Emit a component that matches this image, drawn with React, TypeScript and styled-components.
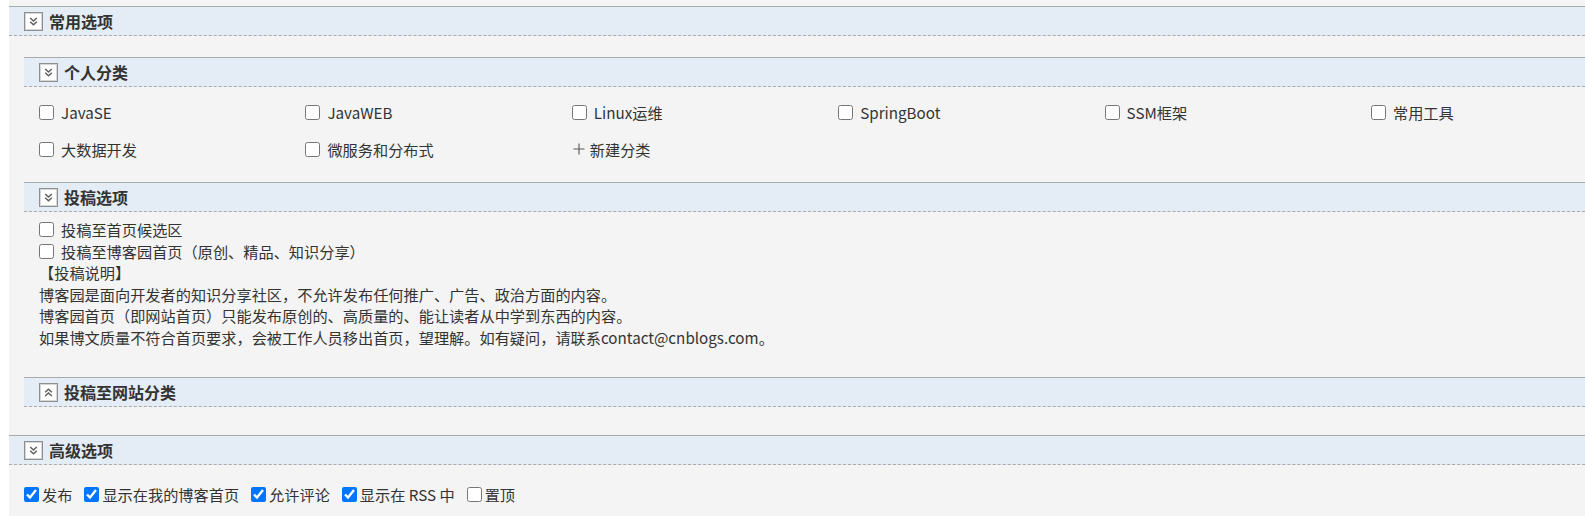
import React from "react";
import styled, { createGlobalStyle } from "styled-components";

const GlobalStyle = createGlobalStyle`
  html, body {
    margin: 0;
    padding: 0;
    background: #ffffff;
  }
  body {
    font-family: "Noto Sans CJK SC", "Noto Sans", sans-serif;
    color: #333;
  }
`;

const Page = styled.div`
  margin-left: 9px;
  padding-top: 6px;
  height: 510px;
  overflow: hidden;
  background: #f4f4f4;
`;

const Section = styled.section<{ $gap?: number }>`
  margin-top: ${(p) => p.$gap ?? 0}px;
`;

const Header = styled.div`
  display: flex;
  align-items: center;
  gap: 6px;
  height: 28px;
  padding-left: 15px;
  background: #e4ecf6;
  border-top: 1px solid #aaaaaa;
  border-bottom: 1px dashed #aaaaaa;
  font-size: 16px;
  font-weight: bold;
  color: #333;
`;

const OuterBody = styled.div`
  padding: 21px 0 0 15px;
`;

const CategoryGrid = styled.div`
  display: grid;
  grid-template-columns: repeat(5, 266.4px) auto;
  row-gap: 15px;
  padding: 14px 0 0 15px;
`;

const Item = styled.label<{ $gap?: number }>`
  display: flex;
  align-items: center;
  gap: ${(p) => p.$gap ?? 7}px;
  height: 22px;
  font-size: 15.2px;
  color: #333;
  white-space: nowrap;
`;

const Check = styled.input.attrs({ type: "checkbox" })`
  width: 15px;
  height: 15px;
  margin: 0;
  flex: none;
`;

const PlusMark = styled.span`
  display: flex;
  align-items: center;
  justify-content: center;
  width: 14px;
  height: 14px;
  color: #555;
`;

const Contribute = styled.div`
  padding: 7px 0 0 15px;
  font-size: 15.2px;
  line-height: 21.5px;
  color: #333;
`;

const ContribLine = styled.label`
  display: flex;
  align-items: center;
  gap: 7px;
  height: 21.5px;
`;

const TextLine = styled.div`
  white-space: nowrap;
`;

const OptionsRow = styled.div`
  display: flex;
  align-items: center;
  padding: 18px 0 0 15px;
  font-size: 15.2px;
  color: #333;
`;

const Option = styled.label`
  display: inline-flex;
  align-items: center;
  gap: 3px;
  height: 22px;
  margin-right: 12px;
  white-space: nowrap;
`;

const ToggleIcon: React.FC<{ up?: boolean }> = ({ up }) => (
  <svg width="19" height="19" viewBox="0 0 19 19" style={{ flex: "none" }}>
    <rect x="0.5" y="0.5" width="18" height="18" fill="#ffffff" stroke="#8f8f8f" />
    <rect x="1.5" y="1.5" width="16" height="16" fill="none" stroke="#d6d6d6" />
    {up ? (
      <g fill="none" stroke="#5f5f5f" strokeWidth="1.5">
        <path d="M6.2 9.2 L9.5 6.2 L12.8 9.2" />
        <path d="M6.2 13 L9.5 10 L12.8 13" />
      </g>
    ) : (
      <g fill="none" stroke="#5f5f5f" strokeWidth="1.5">
        <path d="M6.2 6 L9.5 9 L12.8 6" />
        <path d="M6.2 9.8 L9.5 12.8 L12.8 9.8" />
      </g>
    )}
  </svg>
);

const categories = [
  "JavaSE",
  "JavaWEB",
  "Linux运维",
  "SpringBoot",
  "SSM框架",
  "常用工具",
  "大数据开发",
  "微服务和分布式",
];

const options: { label: string; checked: boolean }[] = [
  { label: "发布", checked: true },
  { label: "显示在我的博客首页", checked: true },
  { label: "允许评论", checked: true },
  { label: "显示在 RSS 中", checked: true },
  { label: "置顶", checked: false },
];

export default function App() {
  return (
    <>
      <GlobalStyle />
      <Page>
        <Section>
          <Header>
            <ToggleIcon />
            常用选项
          </Header>
          <OuterBody>
            <Section>
              <Header>
                <ToggleIcon />
                个人分类
              </Header>
              <CategoryGrid>
                {categories.map((c) => (
                  <Item key={c}>
                    <Check />
                    {c}
                  </Item>
                ))}
                <Item as="div" $gap={4}>
                  <PlusMark>
                    <svg width="12" height="12" viewBox="0 0 12 12">
                      <path d="M6 0.5 V11.5 M0.5 6 H11.5" stroke="#555" strokeWidth="1.1" fill="none" />
                    </svg>
                  </PlusMark>
                  新建分类
                </Item>
              </CategoryGrid>
            </Section>

            <Section $gap={22}>
              <Header>
                <ToggleIcon />
                投稿选项
              </Header>
              <Contribute>
                <ContribLine>
                  <Check />
                  投稿至首页候选区
                </ContribLine>
                <ContribLine>
                  <Check />
                  投稿至博客园首页（原创、精品、知识分享）
                </ContribLine>
                <TextLine>【投稿说明】</TextLine>
                <TextLine>博客园是面向开发者的知识分享社区，不允许发布任何推广、广告、政治方面的内容。</TextLine>
                <TextLine>博客园首页（即网站首页）只能发布原创的、高质量的、能让读者从中学到东西的内容。</TextLine>
                <TextLine>如果博文质量不符合首页要求，会被工作人员移出首页，望理解。如有疑问，请联系contact@cnblogs.com。</TextLine>
              </Contribute>
            </Section>

            <Section $gap={29}>
              <Header>
                <ToggleIcon up />
                投稿至网站分类
              </Header>
            </Section>
          </OuterBody>
        </Section>

        <Section $gap={28}>
          <Header>
            <ToggleIcon />
            高级选项
          </Header>
          <OptionsRow>
            {options.map((o) => (
              <Option key={o.label}>
                <Check defaultChecked={o.checked} />
                {o.label}
              </Option>
            ))}
          </OptionsRow>
        </Section>
      </Page>
    </>
  );
}
